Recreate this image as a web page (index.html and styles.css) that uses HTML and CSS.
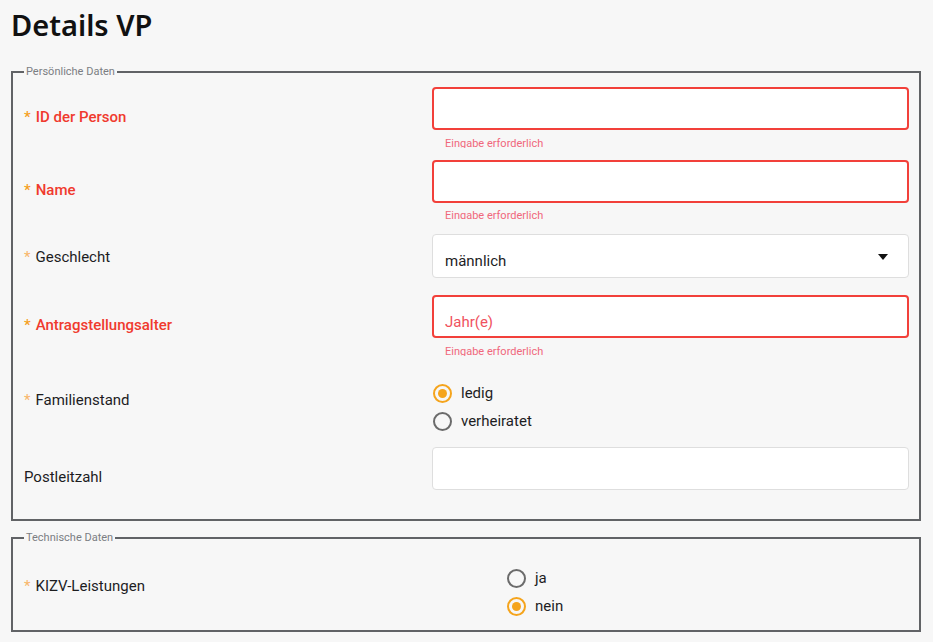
FILE: index.html
```html
<!DOCTYPE html>
<html lang="de">
<head>
    <meta charset="UTF-8">
    <title>Details VP</title>
    <link rel="stylesheet" href="styles.css">
</head>
<body>

<h1 class="page-title">Details VP</h1>

<fieldset class="group">
    <legend>Persönliche Daten</legend>

    <div class="row">
        <div class="label invalid"><span class="req">*</span>ID der Person</div>
        <div class="field">
            <input type="text" class="text-input error">
            <div class="helper">Eingabe erforderlich</div>
        </div>
    </div>

    <div class="row row-name">
        <div class="label invalid"><span class="req">*</span>Name</div>
        <div class="field">
            <input type="text" class="text-input error">
            <div class="helper helper-short">Eingabe erforderlich</div>
        </div>
    </div>

    <div class="row compact row-gender">
        <div class="label"><span class="req light">*</span>Geschlecht</div>
        <div class="field">
            <div class="select-box">
                <span>männlich</span>
                <svg width="10" height="6" viewBox="0 0 10 6"><path d="M0 0h10L5 6z" fill="#111"/></svg>
            </div>
        </div>
    </div>

    <div class="row row-age">
        <div class="label invalid"><span class="req">*</span>Antragstellungsalter</div>
        <div class="field">
            <input type="text" class="text-input error" placeholder="Jahr(e)">
            <div class="helper">Eingabe erforderlich</div>
        </div>
    </div>

    <div class="row compact row-status">
        <div class="label"><span class="req light">*</span>Familienstand</div>
        <div class="field">
            <div class="radio-item"><span class="radio checked"></span>ledig</div>
            <div class="radio-item"><span class="radio"></span>verheiratet</div>
        </div>
    </div>

    <div class="row row-zip">
        <div class="label">Postleitzahl</div>
        <div class="field">
            <input type="text" class="text-input">
            <div class="helper empty"></div>
        </div>
    </div>
</fieldset>

<fieldset class="group group-tech">
    <legend>Technische Daten</legend>

    <div class="row compact row-kizv">
        <div class="label"><span class="req light">*</span>KIZV-Leistungen</div>
        <div class="field">
            <div class="radio-item"><span class="radio"></span>ja</div>
            <div class="radio-item"><span class="radio checked"></span>nein</div>
        </div>
    </div>
</fieldset>

</body>
</html>
```

FILE: styles.css
```css
body {
    margin: 0;
    background: #f7f7f7;
    font-family: Roboto, "Liberation Sans", sans-serif;
    color: #1d1d1f;
}

.page-title {
    margin: 0;
    padding: 6px 0 0 11px;
    font-family: "Noto Sans", sans-serif;
    font-weight: 600;
    font-size: 29px;
    line-height: 38px;
    color: #111;
}

.group {
    margin: 21px 12px 0 11px;
    padding: 0 10px 16px 11px;
    border: 2px solid #616366;
    min-width: 0;
}

.group legend {
    margin-left: 0;
    padding: 0 2px;
    font-size: 11px;
    line-height: 13px;
    color: #7b7e83;
}

.group > .row:first-of-type {
    margin-top: 9px;
}

.row {
    display: grid;
    grid-template-columns: 408px 1fr;
}

.label {
    padding-top: 20px;
    font-size: 15px;
    line-height: 20px;
}

.compact .label {
    padding-top: 11px;
}

.row-gender .label {
    padding-top: 13px;
}

.label.invalid {
    color: #f03a2e;
    font-weight: 500;
}

.req {
    color: #f5a01f;
    margin-right: 5px;
}

.req.light {
    color: #f8b66a;
}

.text-input {
    display: block;
    box-sizing: border-box;
    width: 100%;
    height: 43px;
    margin: 0;
    padding: 10px 12px 0 12px;
    border: 1px solid #dedede;
    border-radius: 4px;
    background: #fff;
    font-family: inherit;
    font-size: 15px;
    outline: none;
}

.text-input.error {
    border: 2px solid #f2403a;
    padding-left: 11px;
}

.text-input::placeholder {
    color: #f0525e;
}

.helper {
    margin-top: 5px;
    height: 13px;
    padding-left: 13px;
    font-size: 11px;
    line-height: 18px;
    color: #f0677c;
    overflow: hidden;
}

.helper-short {
    margin-top: 4px;
    height: 12px;
}

.helper.empty {
    height: 8px;
}

.row-name { margin-top: 12px; }
.row-gender { margin-top: 15px; }
.row-age { margin-top: 17px; }
.row-status { margin-top: 23px; }
.row-zip { margin-top: 12px; }

.select-box {
    box-sizing: border-box;
    height: 44px;
    display: flex;
    align-items: center;
    justify-content: space-between;
    padding: 9px 20px 0 12px;
    background: #fff;
    border: 1px solid #dedede;
    border-radius: 4px;
    font-size: 15px;
}

.select-box svg {
    margin-top: -7px;
}

.radio-item {
    display: flex;
    align-items: center;
    height: 28px;
    font-size: 15px;
}

.radio {
    box-sizing: border-box;
    width: 19px;
    height: 19px;
    margin: 0 9px 0 1px;
    border: 2px solid #6b6b6b;
    border-radius: 50%;
    display: flex;
    align-items: center;
    justify-content: center;
}

.radio.checked {
    border-color: #f5a41c;
}

.radio.checked::after {
    content: "";
    width: 9px;
    height: 9px;
    border-radius: 50%;
    background: #f5a41c;
}

.group-tech {
    margin-top: 10px;
    padding-bottom: 10px;
}

.group-tech .row {
    grid-template-columns: 482px 1fr;
}

.group-tech > .row:first-of-type {
    margin-top: 20px;
}

.group-tech .label {
    padding-top: 12px;
}
```
